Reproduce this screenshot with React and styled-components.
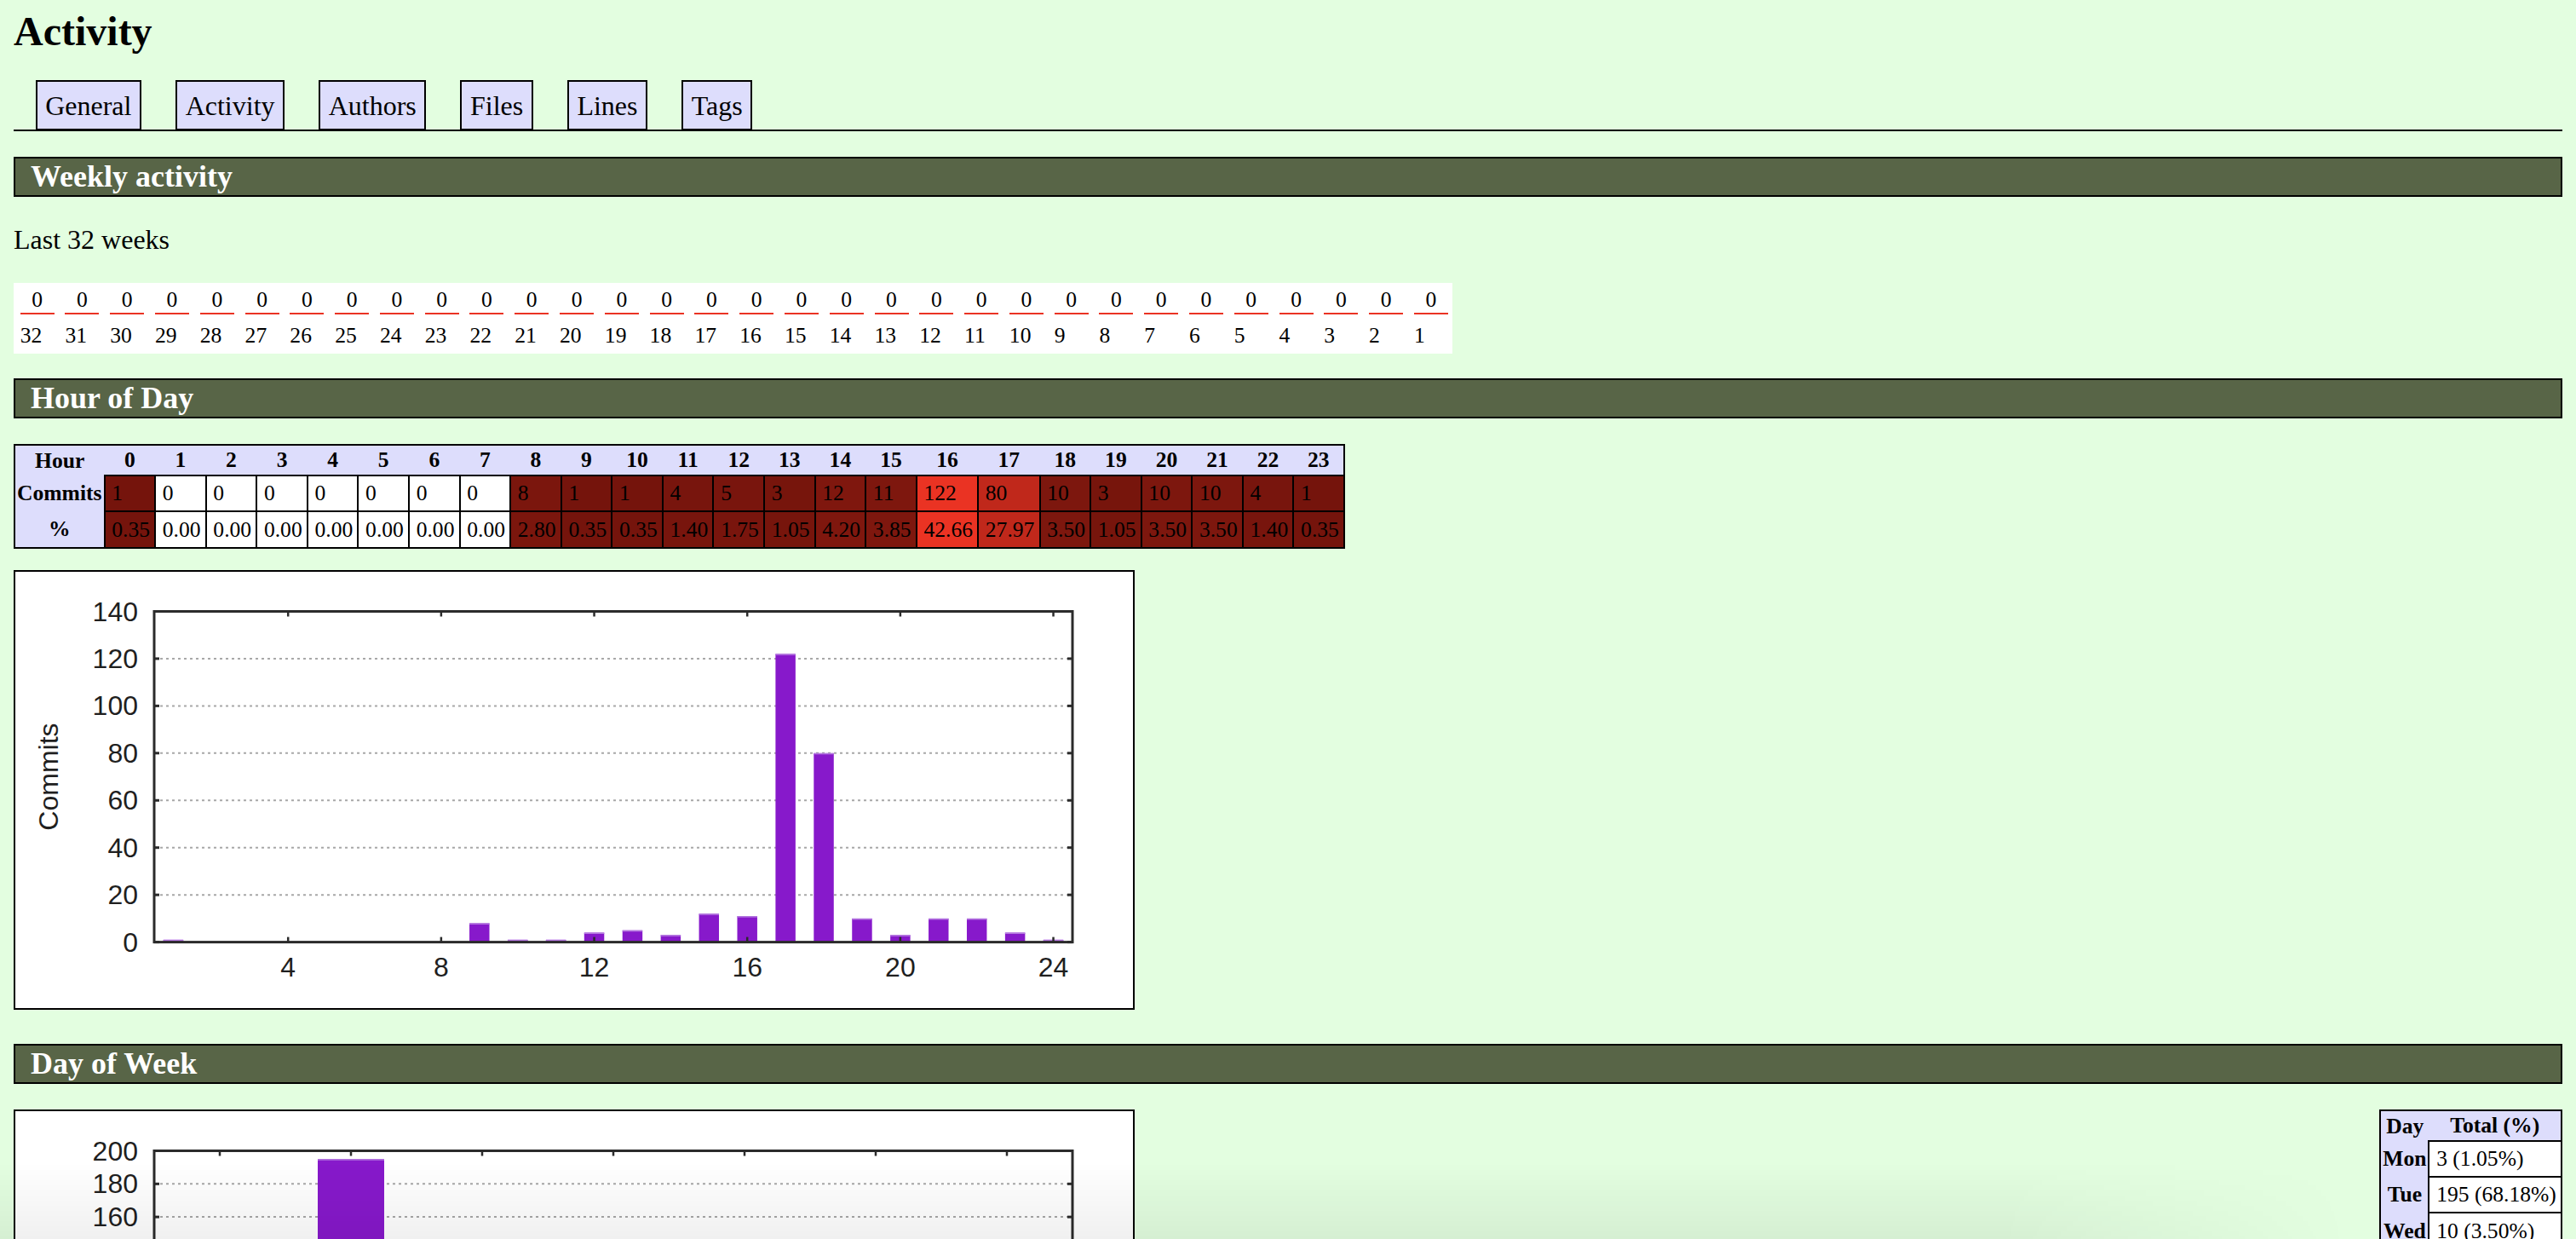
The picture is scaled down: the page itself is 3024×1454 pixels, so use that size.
import React from 'react';
import styled, { createGlobalStyle } from 'styled-components';

/* Colours are the sRGB values of the original stylesheet, expressed the way
   the reference capture shows them (Display-P3 encoded). */
const C = {
  page: '#e3fee0',
  header: '#586547',
  th: '#ddddfc',
  red: '#ea3323',
  bar: '#8719cb',
  barEdge: '#b57ae0',
  axis: '#2b2b2b',
  grid: '#a8a8a8',
};

const lin = (c) => {
  const v = c / 255;
  return v <= 0.04045 ? v / 12.92 : Math.pow((v + 0.055) / 1.055, 2.4);
};
const enc = (c) => {
  const v = Math.max(0, Math.min(1, c));
  return Math.round(255 * (v <= 0.0031308 ? 12.92 * v : 1.055 * Math.pow(v, 1 / 2.4) - 0.055));
};
const toP3 = (r, g, b) => {
  const R = lin(r), G = lin(g), B = lin(b);
  return `rgb(${enc(0.8225 * R + 0.1774 * G)}, ${enc(0.0332 * R + 0.9669 * G)}, ${enc(
    0.0171 * R + 0.0724 * G + 0.9108 * B
  )})`;
};

const GlobalStyle = createGlobalStyle`
  html, body {
    margin: 0;
    padding: 0;
    background-color: ${C.page};
  }
  body {
    color: black;
    font-family: "Liberation Serif", "Times New Roman", serif;
    font-size: 32px;
  }
`;

const Page = styled.div`
  padding: 9px 16px 0;
`;

const Title = styled.h1`
  font-size: 48px;
  font-weight: bold;
  line-height: normal;
  margin: 0 0 32px;
`;

const Nav = styled.div`
  border-bottom: 2px solid black;
  padding: 9.6px;
`;

const NavList = styled.ul`
  list-style-type: none;
  display: inline;
  margin: 0;
  padding: 0;
`;

const NavItem = styled.li`
  display: inline;
`;

const NavLink = styled.a`
  padding: 9.6px;
  text-decoration: none;
  color: black;
  border: 2px solid black;
  margin: 16px;
  background-color: ${C.th};
`;

const SectionTitle = styled.h2`
  background-color: ${C.header};
  border: 2px solid black;
  padding: 0 18px;
  color: white;
  font-size: 36px;
  font-weight: bold;
  line-height: 43px;
  margin: 29.88px 0;
  clear: both;
`;

const Text = styled.p`
  margin: 32px 0;
`;

const DataTable = styled.table`
  border: ${(p) => (p.$noBorders ? 'none' : '2px solid black')};
  border-collapse: collapse;
  font-size: 25.6px;
  font-family: "Liberation Serif", "Times New Roman", serif;
  margin: 0 0 25.6px;
`;

const Cell = styled.td`
  background-color: ${(p) => p.$bg || 'white'};
  border: ${(p) => (p.$plain ? 'none' : '2px solid black')};
  padding: 5.12px 5.12px 5.12px 7.68px;
  text-align: ${(p) => (p.$center ? 'center' : 'left')};
  vertical-align: ${(p) => (p.$bottom ? 'bottom' : 'middle')};
`;

const HeadCell = styled.th`
  background-color: ${C.th};
  padding: 2px;
  font-weight: bold;
  text-align: center;
`;

const WeekBar = styled.div`
  display: block;
  background-color: ${C.red};
  width: 40px;
  height: ${(p) => p.$h}px;
`;

const ChartLine = styled.div`
  line-height: normal;
  padding-bottom: 2px;
`;

const ChartBox = styled.span`
  display: inline-block;
  border: 2px solid black;
  padding: 16px;
  background-color: white;
  vertical-align: baseline;

  svg {
    display: block;
  }
`;

const VTable = styled.div`
  float: right;
  clear: both;
`;

const BottomShade = styled.div`
  position: fixed;
  left: 0;
  bottom: 0;
  width: 2760px;
  height: 90px;
  pointer-events: none;
  background: linear-gradient(to bottom, rgba(0, 0, 0, 0), rgba(0, 0, 0, 0.06));
  -webkit-mask-image: linear-gradient(to right, #000 85%, transparent 100%);
  mask-image: linear-gradient(to right, #000 85%, transparent 100%);
`;

const AxisText = styled.text`
  font-family: "Liberation Sans", Arial, sans-serif;
  font-size: 32px;
  fill: #1f1f1f;
`;

/* ---------- data ---------- */
const TABS = ['General', 'Activity', 'Authors', 'Files', 'Lines', 'Tags'];
const WEEKS = 32;
const HOURS = [1, 0, 0, 0, 0, 0, 0, 0, 8, 1, 1, 4, 5, 3, 12, 11, 122, 80, 10, 3, 10, 10, 4, 1];
const TOTAL = HOURS.reduce((a, b) => a + b, 0);
const BUSIEST = Math.max(...HOURS);
const DAYS = [
  ['Mon', 3],
  ['Tue', 195],
  ['Wed', 10],
  ['Thu', 42],
  ['Fri', 21],
  ['Sat', 9],
  ['Sun', 6],
];

const heat = (c) => (c > 0 ? toP3(127 + Math.floor((c / BUSIEST) * 128), 0, 0) : undefined);

/* ---------- chart ---------- */
const FRAME = { left: 147, right: 1225, top: 30.5, bottom: 418.6 };

function BarChart({ values, xMin, xMax, yMax, xTicks, boxWidth = 0.5 }) {
  const w = FRAME.right - FRAME.left;
  const h = FRAME.bottom - FRAME.top;
  const sx = (x) => FRAME.left + ((x - xMin) / (xMax - xMin)) * w;
  const sy = (y) => FRAME.bottom - (y / yMax) * h;
  const unit = w / (xMax - xMin);
  const yTicks = [];
  for (let v = 0; v <= yMax; v += 20) yTicks.push(v);

  return (
    <svg width="1280" height="480" viewBox="0 0 1280 480">
      {yTicks
        .filter((v) => v > 0 && v < yMax)
        .map((v) => (
          <line
            key={`g${v}`}
            x1={FRAME.left}
            x2={FRAME.right}
            y1={sy(v)}
            y2={sy(v)}
            stroke={C.grid}
            strokeWidth="2"
            strokeDasharray="3 4"
          />
        ))}
      {values.map((v, i) =>
        v > 0 ? (
          <g key={`b${i}`}>
            <rect
              x={sx(i + 1) - (boxWidth * unit) / 2 - 0.5}
              y={sy(v)}
              width={boxWidth * unit + 1}
              height={FRAME.bottom - sy(v)}
              fill={C.bar}
            />
            <rect
              x={sx(i + 1) - (boxWidth * unit) / 2 - 0.5}
              y={sy(v)}
              width={boxWidth * unit + 1}
              height="1.5"
              fill={C.barEdge}
            />
          </g>
        ) : null
      )}
      <rect
        x={FRAME.left}
        y={FRAME.top}
        width={w}
        height={h}
        fill="none"
        stroke={C.axis}
        strokeWidth="3"
      />
      {yTicks.map((v) => (
        <g key={`t${v}`}>
          <line x1={FRAME.left} x2={FRAME.left + 6} y1={sy(v)} y2={sy(v)} stroke={C.axis} strokeWidth="3" />
          <line x1={FRAME.right - 6} x2={FRAME.right} y1={sy(v)} y2={sy(v)} stroke={C.axis} strokeWidth="3" />
          <AxisText x="128" y={sy(v)} textAnchor="end" dominantBaseline="central">
            {v}
          </AxisText>
        </g>
      ))}
      {xTicks.map(([x, label]) => (
        <g key={`x${x}`}>
          <line x1={sx(x)} x2={sx(x)} y1={FRAME.top} y2={FRAME.top + 6} stroke={C.axis} strokeWidth="2.5" />
          <line x1={sx(x)} x2={sx(x)} y1={FRAME.bottom - 6} y2={FRAME.bottom} stroke={C.axis} strokeWidth="2.5" />
          <AxisText x={sx(x)} y="459" textAnchor="middle">
            {label}
          </AxisText>
        </g>
      ))}
      <AxisText
        x="0"
        y="0"
        textAnchor="middle"
        dominantBaseline="central"
        transform={`translate(23 ${(FRAME.top + FRAME.bottom) / 2}) rotate(-90)`}
      >
        Commits
      </AxisText>
    </svg>
  );
}

/* ---------- page ---------- */
export default function App() {
  const weeks = Array.from({ length: WEEKS }, (_, i) => WEEKS - i);

  return (
    <>
      <GlobalStyle />
      <Page>
        <Title>Activity</Title>
        <Nav>
          <NavList>
            {TABS.map((t, i) => (
              <React.Fragment key={t}>
                {i > 0 && ' '}
                <NavItem>
                  <NavLink href="#">{t}</NavLink>
                </NavItem>
              </React.Fragment>
            ))}
          </NavList>
        </Nav>

        <SectionTitle>Weekly activity</SectionTitle>
        <Text>Last 32 weeks</Text>
        <DataTable $noBorders>
          <tbody>
            <tr>
              {weeks.map((w) => (
                <Cell key={`c${w}`} $plain $center $bottom>
                  0<WeekBar $h={2} />
                </Cell>
              ))}
            </tr>
            <tr>
              {weeks.map((w) => (
                <Cell key={`w${w}`} $plain>
                  {w}
                </Cell>
              ))}
            </tr>
          </tbody>
        </DataTable>

        <SectionTitle>Hour of Day</SectionTitle>
        <DataTable>
          <tbody>
            <tr>
              <HeadCell>Hour</HeadCell>
              {HOURS.map((_, i) => (
                <HeadCell key={`h${i}`}>{i}</HeadCell>
              ))}
            </tr>
            <tr>
              <HeadCell>Commits</HeadCell>
              {HOURS.map((c, i) => (
                <Cell key={`c${i}`} $bg={heat(c)}>
                  {c}
                </Cell>
              ))}
            </tr>
            <tr>
              <HeadCell>%</HeadCell>
              {HOURS.map((c, i) => (
                <Cell key={`p${i}`} $bg={heat(c)}>
                  {((100 * c) / TOTAL).toFixed(2)}
                </Cell>
              ))}
            </tr>
          </tbody>
        </DataTable>
        <ChartLine>
          <ChartBox>
            <BarChart
              values={HOURS}
              xMin={0.5}
              xMax={24.5}
              yMax={140}
              xTicks={[4, 8, 12, 16, 20, 24].map((x) => [x, String(x)])}
            />
          </ChartBox>
        </ChartLine>

        <SectionTitle>Day of Week</SectionTitle>
        <VTable>
          <DataTable>
            <tbody>
              <tr>
                <HeadCell>Day</HeadCell>
                <HeadCell>Total (%)</HeadCell>
              </tr>
              {DAYS.map(([d, n]) => (
                <tr key={d}>
                  <HeadCell>{d}</HeadCell>
                  <Cell>
                    {n} ({((100 * n) / TOTAL).toFixed(2)}%)
                  </Cell>
                </tr>
              ))}
            </tbody>
          </DataTable>
        </VTable>
        <ChartLine>
          <ChartBox>
            <BarChart
              values={DAYS.map((d) => d[1])}
              xMin={0.5}
              xMax={7.5}
              yMax={200}
              xTicks={DAYS.map((d, i) => [i + 1, d[0]])}
            />
          </ChartBox>
        </ChartLine>
      </Page>
      <BottomShade />
    </>
  );
}
